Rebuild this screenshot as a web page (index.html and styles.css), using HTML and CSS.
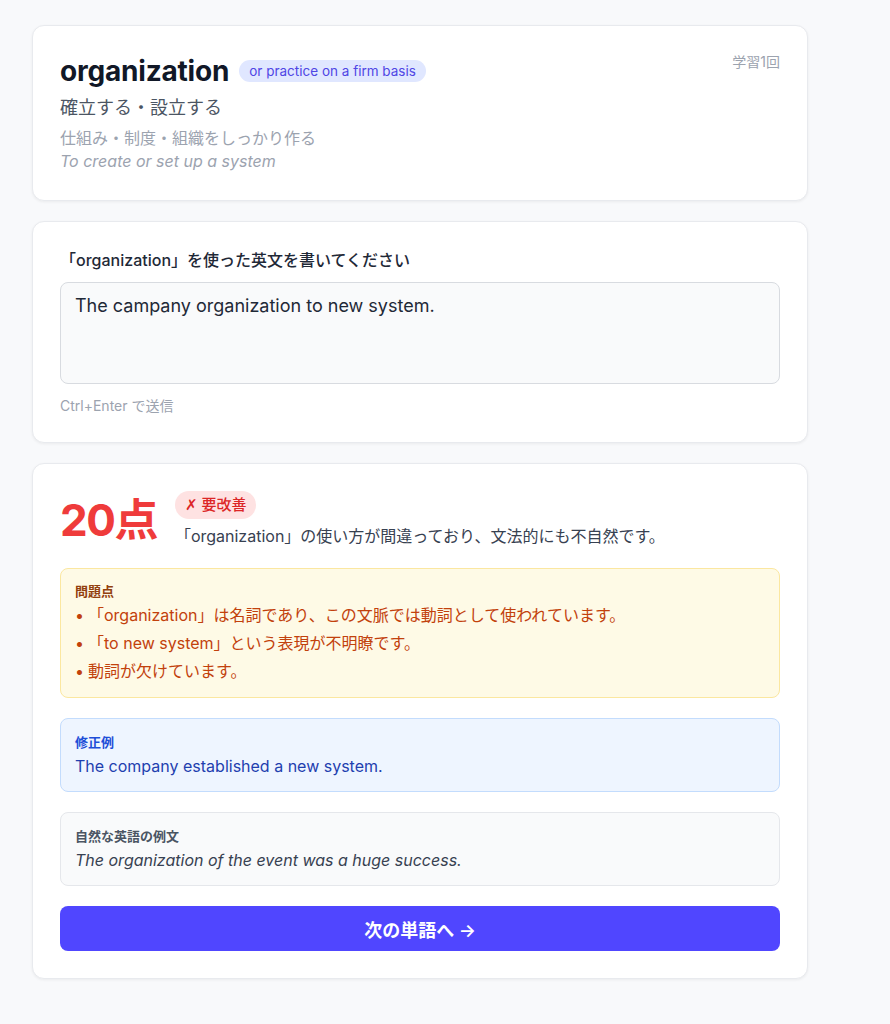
FILE: index.html
```html
<!DOCTYPE html>
<html lang="ja">
<head>
    <meta charset="UTF-8">
    <meta name="viewport" content="width=device-width, initial-scale=1.0">
    <title>単語学習</title>
    <link rel="stylesheet" href="styles.css">
</head>
<body>
    <div class="container">
        <div class="card word-card">
            <div class="word-head">
                <h1 class="word">organization</h1>
                <span class="tag">or practice on a firm basis</span>
                <span class="count">学習1回</span>
            </div>
            <p class="meaning">確立する・設立する</p>
            <p class="detail">仕組み・制度・組織をしっかり作る</p>
            <p class="english">To create or set up a system</p>
        </div>

        <div class="card input-card">
            <label class="prompt" for="answer">「organization」を使った英文を書いてください</label>
            <textarea id="answer" class="answer">The campany organization to new system.</textarea>
            <p class="hint">Ctrl+Enter で送信</p>
        </div>

        <div class="card result-card">
            <div class="score-row">
                <div class="score">20点</div>
                <div class="score-info">
                    <span class="verdict"><span class="mark">✗</span> 要改善</span>
                    <p class="comment">「organization」の使い方が間違っており、文法的にも不自然です。</p>
                </div>
            </div>

            <div class="box box-problem">
                <h3 class="box-title">問題点</h3>
                <ul class="problems">
                    <li>「organization」は名詞であり、この文脈では動詞として使われています。</li>
                    <li>「to new system」という表現が不明瞭です。</li>
                    <li>動詞が欠けています。</li>
                </ul>
            </div>

            <div class="box box-fix">
                <h3 class="box-title">修正例</h3>
                <p class="box-text">The company established a new system.</p>
            </div>

            <div class="box box-example">
                <h3 class="box-title">自然な英語の例文</h3>
                <p class="box-text italic">The organization of the event was a huge success.</p>
            </div>

            <button class="next-btn">次の単語へ →</button>
        </div>
    </div>
</body>
</html>
```

FILE: styles.css
```css
*{
    padding: 0;
    margin: 0;
    box-sizing: border-box;
}
body{
    background: #f8f9fb;
    font-family: Inter, "Noto Sans CJK JP", sans-serif;
    color: #1f2937;
}
.container{
    width: 776px;
    margin-left: 32px;
    padding-top: 25px;
    padding-bottom: 40px;
    display: flex;
    flex-direction: column;
    gap: 20px;
}
.card{
    background: #fff;
    border: 1px solid #e8eaee;
    border-radius: 12px;
    box-shadow: 0 1px 3px rgba(0,0,0,0.06);
    padding: 27px;
}

/* word card */
.word-head{
    display: flex;
    align-items: center;
    gap: 10px;
    height: 36px;
}
.word{
    font-size: 28px;
    font-weight: 700;
    color: #111827;
    letter-spacing: -0.2px;
}
.tag{
    background: #e0e7ff;
    color: #4f46e5;
    font-size: 13.5px;
    padding: 3px 10px;
    border-radius: 999px;
}
.count{
    margin-left: auto;
    align-self: flex-start;
    font-size: 14px;
    line-height: 18px;
    color: #9ca3af;
}
.meaning{
    font-size: 18px;
    color: #4b5563;
    margin-top: 6px;
    line-height: 26px;
}
.detail{
    font-size: 16px;
    color: #9ca3af;
    margin-top: 5px;
    line-height: 24px;
}
.english{
    font-size: 16px;
    color: #9ca3af;
    font-style: italic;
    line-height: 23px;
}

/* input card */
.prompt{
    display: block;
    font-size: 16px;
    font-weight: 500;
    color: #1f2937;
    line-height: 22px;
}
.answer{
    display: block;
    width: 100%;
    height: 102px;
    margin-top: 11px;
    padding: 12px 14px;
    background: #f9fafb;
    border: 1px solid #d8dbe0;
    border-radius: 8px;
    font-family: Inter, "Noto Sans CJK JP", sans-serif;
    font-size: 18px;
    color: #1f2937;
    resize: none;
    outline: none;
}
.hint{
    font-size: 14px;
    color: #9ca3af;
    margin-top: 12px;
    line-height: 19px;
}

/* result card */
.result-card{
    display: flex;
    flex-direction: column;
    gap: 20px;
}
.score-row{
    display: flex;
    align-items: center;
    gap: 18px;
}
.score{
    font-size: 44px;
    font-weight: 700;
    color: #ef3b3b;
    line-height: 56px;
    letter-spacing: -1.5px;
}
.score-info{
    display: flex;
    flex-direction: column;
    align-items: flex-start;
    gap: 5px;
}
.verdict{
    background: #fee2e2;
    color: #dc2626;
    font-size: 15px;
    line-height: 21px;
    font-weight: 500;
    padding: 3px 10px;
    border-radius: 999px;
}
.mark{
    font-family: "DejaVu Sans", sans-serif;
    font-weight: 400;
}
.comment{
    font-size: 16px;
    color: #374151;
    line-height: 24px;
}
.box{
    border-radius: 8px;
    border: 1px solid;
    padding: 12px 14px;
}
.box-title{
    font-size: 13px;
    font-weight: 700;
    line-height: 22px;
}
.box-text{
    font-size: 16px;
    line-height: 26px;
}
.italic{
    font-style: italic;
}
.box-problem{
    background: #fefae6;
    border-color: #fbe7a0;
}
.box-problem .box-title{
    color: #92400e;
    line-height: 20px;
}
.problems{
    list-style: none;
    color: #c2410c;
    font-size: 16px;
}
.problems li{
    line-height: 28px;
}
.problems li::before{
    content: "•";
    margin-right: 4px;
}
.box-fix{
    background: #eef5ff;
    border-color: #c3dcfd;
}
.box-fix .box-title{
    color: #1d4ed8;
}
.box-fix .box-text{
    color: #1e40af;
}
.box-example{
    background: #f9fafb;
    border-color: #e5e7eb;
}
.box-example .box-title{
    color: #4b5563;
}
.box-example .box-text{
    color: #374151;
}
.next-btn{
    height: 45px;
    border: none;
    border-radius: 8px;
    background: #5046ff;
    color: #fff;
    font-family: Inter, "Noto Sans CJK JP", sans-serif;
    font-size: 18px;
    font-weight: 600;
}
```
